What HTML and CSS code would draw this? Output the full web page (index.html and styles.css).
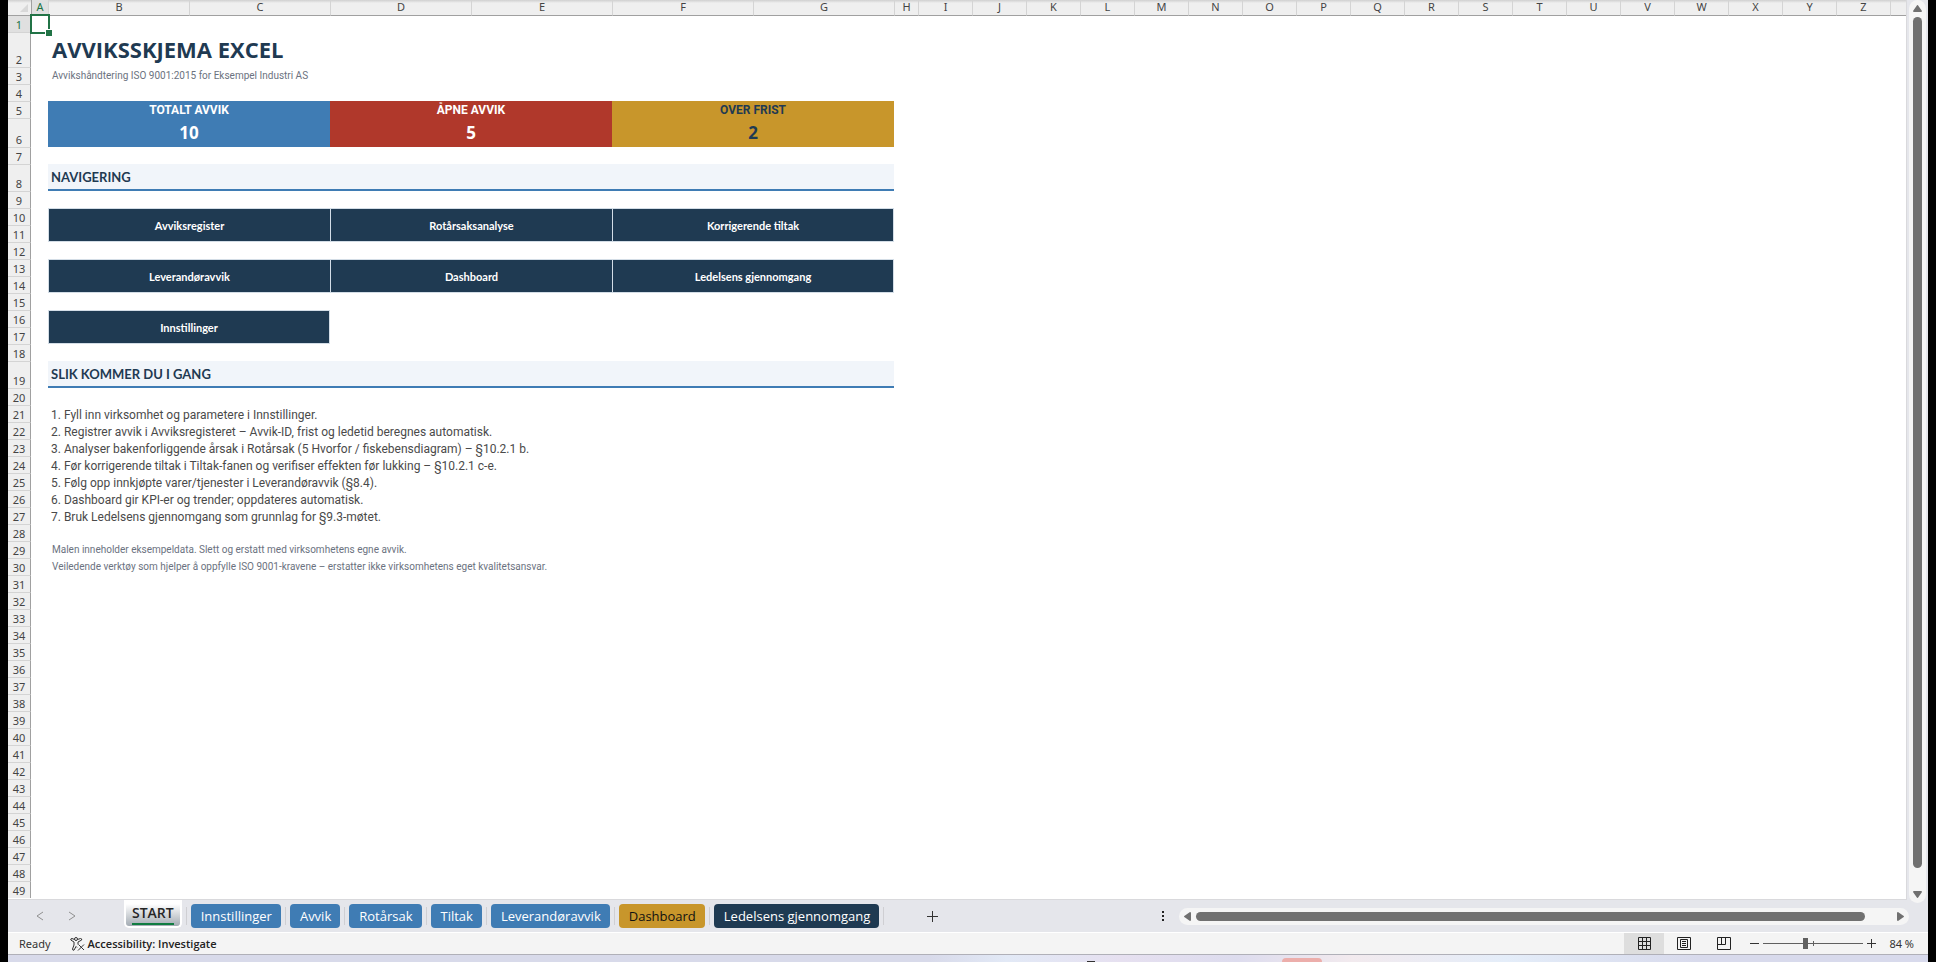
FILE: index.html
```html
<!DOCTYPE html>
<html lang="nb">
<head>
    <meta charset="UTF-8">
    <meta name="viewport" content="width=device-width, initial-scale=1.0">
    <title>Avviksskjema Excel</title>
    <link rel="stylesheet" href="styles.css">
</head>
<body>
    <div class="window">
        <main class="workspace">
            <div class="sheet">
                <table class="grid">
                    <colgroup>
                        <col class="col-rows"><col class="col-a">
                        <col class="col-wide" span="6">
                        <col class="col-h">
                        <col class="col-std" span="18">
                        <col>
                    </colgroup>
                    <thead>
                        <tr>
                            <th class="corner"><svg width="8" height="8" viewBox="0 0 8 8"><path d="M8 0V8H0Z" fill="#d8d8d8"/></svg></th>
                            <th class="selected">A</th><th>B</th><th>C</th><th>D</th><th>E</th><th>F</th><th>G</th><th>H</th><th>I</th><th>J</th><th>K</th><th>L</th><th>M</th><th>N</th><th>O</th><th>P</th><th>Q</th><th>R</th><th>S</th><th>T</th><th>U</th><th>V</th><th>W</th><th>X</th><th>Y</th><th>Z</th><th></th>
                        </tr>
                    </thead>
                    <tbody>
                        <tr class="row-first"><th class="selected">1</th><td class="active-cell"><span class="selection"></span></td><td colspan="26"></td></tr>
                        <tr class="row-title"><th>2</th><td></td><td colspan="6" class="title">AVVIKSSKJEMA EXCEL</td><td colspan="20"></td></tr>
                        <tr><th>3</th><td></td><td colspan="6" class="note">Avvikshåndtering ISO 9001:2015 for Eksempel Industri AS</td><td colspan="20"></td></tr>
                        <tr><th>4</th><td colspan="27"></td></tr>
                        <tr class="kpi-label"><th>5</th><td></td><td colspan="2" class="blue">TOTALT AVVIK</td><td colspan="2" class="red">ÅPNE AVVIK</td><td colspan="2" class="gold">OVER FRIST</td><td colspan="20"></td></tr>
                        <tr class="kpi-value"><th>6</th><td></td><td colspan="2" class="blue">10</td><td colspan="2" class="red">5</td><td colspan="2" class="gold">2</td><td colspan="20"></td></tr>
                        <tr><th>7</th><td colspan="27"></td></tr>
                        <tr class="row-section"><th>8</th><td></td><td colspan="6" class="section">NAVIGERING</td><td colspan="20"></td></tr>
                        <tr><th>9</th><td colspan="27"></td></tr>
                        <tr><th>10</th><td rowspan="2"></td><td colspan="2" rowspan="2" class="nav"><a href="#avvik">Avviksregister</a></td><td colspan="2" rowspan="2" class="nav"><a href="#rotarsak">Rotårsaksanalyse</a></td><td colspan="2" rowspan="2" class="nav nav-last"><a href="#tiltak">Korrigerende tiltak</a></td><td colspan="20"></td></tr>
                        <tr><th>11</th><td colspan="20"></td></tr>
                        <tr><th>12</th><td colspan="27"></td></tr>
                        <tr><th>13</th><td rowspan="2"></td><td colspan="2" rowspan="2" class="nav"><a href="#leverandoravvik">Leverandøravvik</a></td><td colspan="2" rowspan="2" class="nav"><a href="#dashboard">Dashboard</a></td><td colspan="2" rowspan="2" class="nav nav-last"><a href="#ledelse">Ledelsens gjennomgang</a></td><td colspan="20"></td></tr>
                        <tr><th>14</th><td colspan="20"></td></tr>
                        <tr><th>15</th><td colspan="27"></td></tr>
                        <tr><th>16</th><td rowspan="2"></td><td colspan="2" rowspan="2" class="nav nav-last"><a href="#innstillinger">Innstillinger</a></td><td colspan="24"></td></tr>
                        <tr><th>17</th><td colspan="24"></td></tr>
                        <tr><th>18</th><td colspan="27"></td></tr>
                        <tr class="row-section"><th>19</th><td></td><td colspan="6" class="section">SLIK KOMMER DU I GANG</td><td colspan="20"></td></tr>
                        <tr><th>20</th><td colspan="27"></td></tr>
                        <tr><th>21</th><td></td><td colspan="26" class="step">1. Fyll inn virksomhet og parametere i Innstillinger.</td></tr>
                        <tr><th>22</th><td></td><td colspan="26" class="step">2. Registrer avvik i Avviksregisteret – Avvik-ID, frist og ledetid beregnes automatisk.</td></tr>
                        <tr><th>23</th><td></td><td colspan="26" class="step">3. Analyser bakenforliggende årsak i Rotårsak (5 Hvorfor / fiskebensdiagram) – §10.2.1 b.</td></tr>
                        <tr><th>24</th><td></td><td colspan="26" class="step">4. Før korrigerende tiltak i Tiltak-fanen og verifiser effekten før lukking – §10.2.1 c-e.</td></tr>
                        <tr><th>25</th><td></td><td colspan="26" class="step">5. Følg opp innkjøpte varer/tjenester i Leverandøravvik (§8.4).</td></tr>
                        <tr><th>26</th><td></td><td colspan="26" class="step">6. Dashboard gir KPI-er og trender; oppdateres automatisk.</td></tr>
                        <tr><th>27</th><td></td><td colspan="26" class="step">7. Bruk Ledelsens gjennomgang som grunnlag for §9.3-møtet.</td></tr>
                        <tr><th>28</th><td colspan="27"></td></tr>
                        <tr><th>29</th><td></td><td colspan="26" class="note">Malen inneholder eksempeldata. Slett og erstatt med virksomhetens egne avvik.</td></tr>
                        <tr><th>30</th><td></td><td colspan="26" class="note">Veiledende verktøy som hjelper å oppfylle ISO 9001-kravene – erstatter ikke virksomhetens eget kvalitetsansvar.</td></tr>
                        <tr><th>31</th><td colspan="27"></td></tr>
                        <tr><th>32</th><td colspan="27"></td></tr>
                        <tr><th>33</th><td colspan="27"></td></tr>
                        <tr><th>34</th><td colspan="27"></td></tr>
                        <tr><th>35</th><td colspan="27"></td></tr>
                        <tr><th>36</th><td colspan="27"></td></tr>
                        <tr><th>37</th><td colspan="27"></td></tr>
                        <tr><th>38</th><td colspan="27"></td></tr>
                        <tr><th>39</th><td colspan="27"></td></tr>
                        <tr><th>40</th><td colspan="27"></td></tr>
                        <tr><th>41</th><td colspan="27"></td></tr>
                        <tr><th>42</th><td colspan="27"></td></tr>
                        <tr><th>43</th><td colspan="27"></td></tr>
                        <tr><th>44</th><td colspan="27"></td></tr>
                        <tr><th>45</th><td colspan="27"></td></tr>
                        <tr><th>46</th><td colspan="27"></td></tr>
                        <tr><th>47</th><td colspan="27"></td></tr>
                        <tr><th>48</th><td colspan="27"></td></tr>
                        <tr><th>49</th><td colspan="27"></td></tr>
                    </tbody>
                </table>
            </div>
            <div class="scroll scroll-y">
                <button aria-label="Scroll up"><svg width="9" height="7" viewBox="0 0 9 7"><path d="M4.500 0Q5 0 5.500 1L9 6Q9 7 8 7H1Q0 7 0 6L3.500 1Q4 0 4.500 0Z"/></svg></button>
                <div class="thumb"></div>
                <button aria-label="Scroll down"><svg width="9" height="7" viewBox="0 0 9 7"><path d="M4.500 7Q5 7 5.500 6L9 1Q9 0 8 0H1Q0 0 0 1L3.500 6Q4 7 4.500 7Z"/></svg></button>
            </div>
        </main>

        <nav class="tabs">
            <div class="tab-arrows">
                <button aria-label="Previous sheet"><svg width="8" height="10" viewBox="0 0 8 10"><path d="M7 1L1 5L7 9" fill="none" stroke="#909090"/></svg></button>
                <button aria-label="Next sheet"><svg width="8" height="10" viewBox="0 0 8 10"><path d="M1 1L7 5L1 9" fill="none" stroke="#909090"/></svg></button>
            </div>
            <div class="tab-list">
                <a href="#start" class="tab tab-active"><span>START</span></a>
                <a href="#innstillinger" class="tab blue">Innstillinger</a>
                <a href="#avvik" class="tab blue">Avvik</a>
                <a href="#rotarsak" class="tab blue">Rotårsak</a>
                <a href="#tiltak" class="tab blue">Tiltak</a>
                <a href="#leverandoravvik" class="tab blue">Leverandøravvik</a>
                <a href="#dashboard" class="tab tab-gold">Dashboard</a>
                <a href="#ledelse" class="tab tab-navy">Ledelsens gjennomgang</a>
            </div>
            <button class="add" aria-label="New sheet"><svg width="11" height="11" viewBox="0 0 11 11"><path d="M0 5.500H11M5.500 0V11" stroke="#333"/></svg></button>
            <div class="tab-end">
                <svg class="dots" width="2" height="10" viewBox="0 0 2 10"><path d="M0 0H2V2H0ZM0 4H2V6H0ZM0 8H2V10H0Z" fill="#222"/></svg>
                <div class="scroll scroll-x">
                    <button aria-label="Scroll left"><svg width="7" height="9" viewBox="0 0 7 9"><path d="M0 4.500Q0 4 1 3.500L6 0Q7 0 7 1V8Q7 9 6 9L1 5.500Q0 5 0 4.500Z"/></svg></button>
                    <div class="thumb"></div>
                    <button aria-label="Scroll right"><svg width="7" height="9" viewBox="0 0 7 9"><path d="M7 4.500Q7 4 6 3.500L1 0Q0 0 0 1V8Q0 9 1 9L6 5.500Q7 5 7 4.500Z"/></svg></button>
                </div>
            </div>
        </nav>

        <footer class="status">
            <span class="ready">Ready</span>
            <button class="accessibility">
                <svg width="15" height="14" viewBox="0 0 15 14" fill="none" stroke="#333" stroke-width="1">
                    <circle cx="6" cy="2" r="1.500"/>
                    <path d="M4.500 2.500L2 1.500Q.5 1.500 .8 3L4 5V8L2.500 12Q2.500 13.500 4 13.200L6 9.500L7 10.500M7.500 2.500L10.500 1.500Q12 1.500 11.700 3L8 5V7.500M8.500 7.500L14 13M14 7.500L8 13.500"/>
                </svg>
                Accessibility: Investigate
            </button>
            <div class="views">
                <button class="view view-on" aria-label="Normal"><svg width="13" height="13" viewBox="0 0 13 13"><path d="M.5 .5H12.500V12.500H.5ZM4.500 0V13M8.500 0V13M0 4.500H13M0 8.500H13"/></svg></button>
                <button class="view" aria-label="Page layout"><svg width="14" height="13" viewBox="0 0 14 13"><path d="M.5 .5H13.500V12.500H.5ZM3.500 2.500H10.500V10.500H3.500ZM5 4.500H9M5 6.500H9M5 8.500H9"/></svg></button>
                <button class="view" aria-label="Page break preview"><svg width="14" height="13" viewBox="0 0 14 13"><path d="M.5 .5H13.500V12.500H.5ZM.5 7.500H8.500V.5M4.500 .5V7.500"/></svg></button>
            </div>
            <div class="zoom">
                <button aria-label="Zoom out"><svg width="9" height="9" viewBox="0 0 9 9"><path d="M0 4.500H9" stroke="#333"/></svg></button>
                <div class="slider">
                    <input type="range" min="0" max="100" value="42" aria-label="Zoom">
                </div>
                <button aria-label="Zoom in"><svg width="9" height="9" viewBox="0 0 9 9"><path d="M0 4.500H9M4.500 0V9" stroke="#333"/></svg></button>
                <span class="percent">84 %</span>
            </div>
        </footer>
        <div class="taskbar"><span class="app-icon"></span><span class="app"></span></div>
    </div>
</body>
</html>
```
FILE: styles.css
```css
* {
    box-sizing: border-box;
}

body {
    margin: 0;
    padding: 0 8px;
    background: #000;
    font-family: "Noto Sans", sans-serif;
    font-size: 11px;
    color: #333;
    overflow: hidden;
}

button {
    display: flex;
    align-items: center;
    justify-content: center;
    margin: 0;
    padding: 0;
    border: none;
    background: none;
    font: inherit;
    color: inherit;
}

a {
    color: inherit;
    text-decoration: none;
}

.window {
    display: flex;
    flex-direction: column;
    height: 100vh;
    background: #e5e6eb;
}

.workspace {
    display: flex;
    flex: 1;
    min-height: 0;
}

/* Sheet */
.sheet {
    flex: 1;
    min-width: 0;
    overflow: hidden;
    background: #fff;
    border-right: 1px solid #d9d9dc;
    border-bottom: 1px solid #d9d9dc;
}

.grid {
    width: 100%;
    table-layout: fixed;
    border-collapse: separate;
    border-spacing: 0;
    line-height: 16px;
}

.col-rows {
    width: 23px;
}

.col-a {
    width: 17px;
}

.col-wide {
    width: 141px;
}

.col-h {
    width: 24px;
}

.col-std {
    width: 54px;
}

.grid th,
.grid td {
    padding: 0;
    white-space: nowrap;
}

.grid th {
    font-weight: normal;
    line-height: 14px;
    color: #444;
    background: #efefef;
}

.grid thead th {
    height: 16px;
    vertical-align: top;
    border-left: 1px solid #d4d4d4;
    border-bottom: 1px solid #a0a0a0;
    background: linear-gradient(#cfcfcf, #efefef 3px);
}

.grid thead .corner {
    padding-left: 8px;
    border-left: none;
    vertical-align: middle;
    line-height: 0;
}

.grid thead .selected {
    border-left-color: #a0a0a0;
    background: #e0e0e0;
}

.grid .selected {
    color: #217346;
    background: #e0e0e0;
}

.grid tbody tr {
    height: 17px;
}

.grid tbody th {
    vertical-align: bottom;
    border-top: 1px solid #d4d4d4;
    border-right: 1px solid #a0a0a0;
}

.grid tbody .row-first {
    height: 16px;
}

.grid .row-first th {
    border-top: none;
}

.grid tbody .row-title {
    height: 35px;
}

.grid tbody .kpi-value {
    height: 29px;
}

.grid tbody .row-section {
    height: 27px;
}

.active-cell {
    position: relative;
}

.selection {
    position: absolute;
    top: -2px;
    left: -1px;
    right: -2px;
    bottom: -2px;
    border: 2px solid #217346;
}

.selection::after {
    content: "";
    position: absolute;
    right: -4px;
    bottom: -4px;
    width: 6px;
    height: 6px;
    background: #217346;
    border-top: 1px solid #fff;
    border-left: 1px solid #fff;
}

.grid .title {
    padding-left: 4px;
    vertical-align: top;
    font: bold 22px/34px "Open Sans", sans-serif;
    color: #1f3a52;
}

.grid .note {
    padding-left: 4px;
    font-family: Roboto, sans-serif;
    font-size: 10px;
    color: #6b7280;
}

.grid .step {
    padding-left: 3px;
    vertical-align: bottom;
    font-family: Roboto, sans-serif;
    font-size: 12px;
    line-height: 14px;
    color: #4a4a4a;
}

.blue {
    color: #fff;
    background: #3f7cb4;
}

.red {
    color: #fff;
    background: #b0382b;
}

.gold {
    color: #1f3a52;
    background: #c8962b;
}

.kpi-label td {
    font-family: Roboto, sans-serif;
    font-size: 12px;
    font-weight: bold;
    text-align: center;
}

.kpi-value td {
    font-family: "Open Sans", sans-serif;
    font-size: 17px;
    font-weight: bold;
    text-align: center;
}

.grid .section {
    padding-left: 3px;
    font-family: Lato, sans-serif;
    font-size: 13px;
    font-weight: bold;
    color: #1f3a52;
    background: #f1f5fa;
    border-bottom: 2px solid #3f7cb4;
}

.grid .nav {
    padding-top: 2px;
    font-family: Lato, sans-serif;
    font-weight: bold;
    text-align: center;
    color: #fff;
    background: #1f3a52;
    border: 1px solid #d3dde6;
    border-right: none;
}

.grid .nav-last {
    border-right: 1px solid #d3dde6;
}

.nav a {
    display: block;
}

/* Scrollbars */
.scroll {
    display: flex;
    align-items: center;
    gap: 5px;
    border-radius: 9px;
    background: #f5f5f5;
}

.scroll svg {
    display: block;
    fill: #707070;
}

.scroll .thumb {
    flex: 1;
    border-radius: 5px;
    background: #707070;
}

.scroll-y {
    flex-direction: column;
    width: 17px;
    margin: 0 2px -3px;
    padding: 5px 0;
}

.scroll-y .thumb {
    width: 9px;
    margin-bottom: 18px;
}

.scroll-x {
    flex: 1;
    height: 17px;
    padding: 0 5px;
}

.scroll-x .thumb {
    height: 9px;
    margin-right: 27px;
}

/* Sheet tabs */
.tabs {
    display: flex;
    height: 32px;
    padding-right: 19px;
}

.tab-arrows {
    display: flex;
    align-items: center;
    gap: 24px;
    width: 116px;
    padding-left: 28px;
}

.tab-list {
    display: flex;
    align-items: flex-start;
}

.tab {
    position: relative;
    height: 24px;
    margin: 4px 9px 0 0;
    padding: 0 9px 0 10px;
    border-radius: 4px;
    font-family: "Open Sans", sans-serif;
    font-size: 13px;
    line-height: 24px;
}

.tab::after {
    content: "";
    position: absolute;
    top: 3px;
    right: -5px;
    width: 1px;
    height: 18px;
    background: #cfcfd3;
}

.tab-active {
    height: 28px;
    margin-top: 0;
    padding: 3px 6px 0;
    border: 2px solid #fff;
    border-top: none;
    border-radius: 0 0 5px 5px;
    font-size: 14px;
    font-weight: 600;
    line-height: 20px;
    color: #262626;
    background: linear-gradient(#fff 4px, #a3abb3);
}

.tab-active::after {
    top: 7px;
    right: -7px;
}

.tab-active span {
    display: block;
    border-bottom: 2px solid #107c41;
}

.tab-gold {
    color: #111;
    background: #c8962b;
}

.tab-navy {
    color: #fff;
    background: #1f3a52;
}

.add {
    width: 20px;
    margin: 0 34px;
}

.tab-end {
    display: flex;
    flex: 1;
    align-items: center;
    gap: 15px;
    max-width: 747px;
    margin-left: auto;
}

/* Status bar */
.status {
    display: flex;
    align-items: center;
    height: 23px;
    padding: 0 14px 0 11px;
    border-top: 1px solid #fff;
    border-bottom: 1px solid #b0b0b8;
    background: #f4f4f4;
}

.accessibility {
    gap: 3px;
    margin-left: 19px;
    font-family: "Open Sans", sans-serif;
    font-weight: 600;
    color: #222;
}

.views {
    display: flex;
    align-self: stretch;
    margin-left: auto;
}

.view {
    width: 40px;
}

.view-on {
    background: #dedede;
}

.view svg {
    fill: none;
    stroke: #222;
}

.zoom {
    display: flex;
    align-items: center;
    gap: 4px;
    margin-left: 6px;
}

.slider {
    position: relative;
    display: flex;
    width: 100px;
}

.slider::after {
    content: "";
    position: absolute;
    left: 50px;
    top: 3px;
    width: 1px;
    height: 5px;
    background: #606060;
}

.slider input {
    width: 100%;
    height: 11px;
    margin: 0;
    appearance: none;
    background: linear-gradient(#606060, #606060) center / 100% 1px no-repeat;
}

.slider input::-webkit-slider-thumb {
    appearance: none;
    width: 5px;
    height: 11px;
    background: #606060;
}

.percent {
    margin-left: 9px;
}

/* Strip of the desktop taskbar under the window */
.taskbar {
    display: flex;
    align-items: flex-end;
    gap: 187px;
    height: 7px;
    padding-left: calc(56% + 4px);
    background: linear-gradient(90deg, #d8daea, #d8daea 48%, #e2e9f6 52%, #e6e0f0 58%, #dddcee 64%, #f2eaee 70%, #e4edf9 78%, #d8daec 88%);
}

.app-icon {
    width: 8px;
    height: 1px;
    background: #333;
}

.app {
    width: 40px;
    height: 4px;
    border-radius: 4px 4px 0 0;
    background: #ecaeab;
}
```
